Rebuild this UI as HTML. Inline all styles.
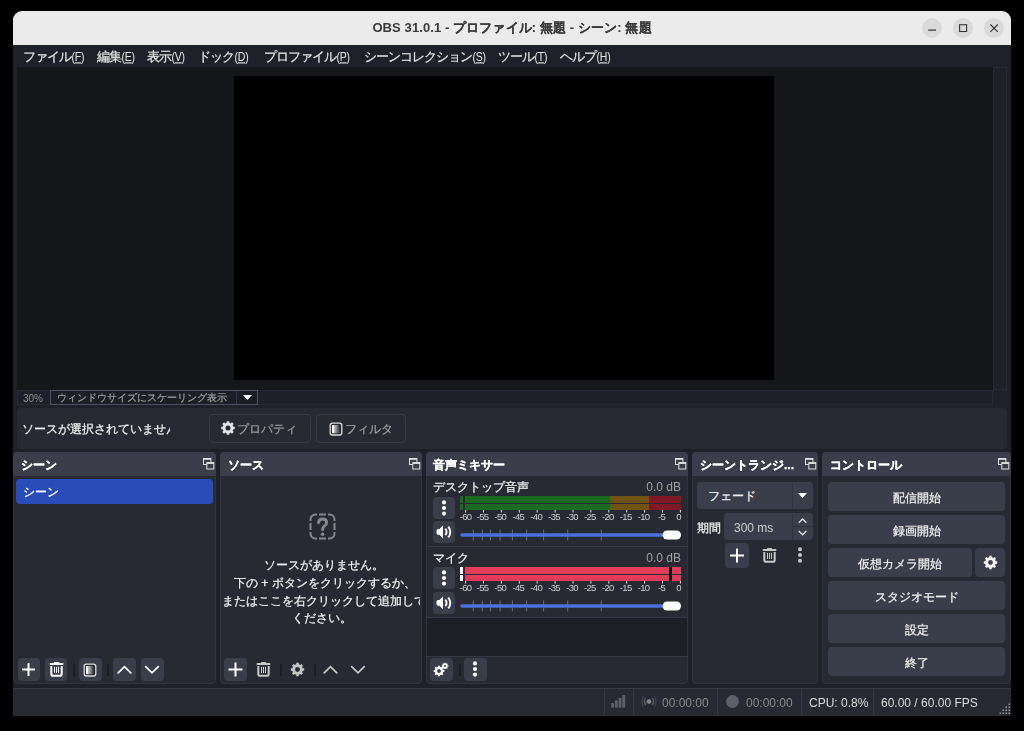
<!DOCTYPE html>
<html><head><meta charset="utf-8">
<style>
*{box-sizing:border-box;margin:0;padding:0}
html,body{width:1024px;height:731px;background:#000;overflow:hidden;font-family:"Liberation Sans",sans-serif;color:#fff;position:relative}
.a{position:absolute}
.t{position:absolute;white-space:nowrap;line-height:1}
svg{position:absolute;overflow:visible}
#win{left:13px;top:11px;width:998px;height:705px;background:#1f212a;border-radius:9px 9px 0 0;overflow:hidden}
#title{left:13px;top:11px;width:998px;height:34px;background:#ebebeb;border-radius:9px 9px 0 0}
.wb{width:20px;height:20px;border-radius:50%;background:#dadada;top:17.5px}
.menu{top:50px;font-size:13px;letter-spacing:-1px;color:#e6e6e6;-webkit-text-stroke:0.2px #e6e6e6}
.mn{display:inline-block;font-weight:normal;font-size:10.5px;letter-spacing:-0.2px;-webkit-text-stroke:0;transform:scaleY(1.15);transform-origin:50% 75%;margin-left:0.5px}
.mn u{text-decoration:underline;text-decoration-thickness:1px;text-underline-offset:1px}
#preview{left:17px;top:67px;width:976px;height:323px;background:#16171b}
#canvas{left:234px;top:76px;width:540px;height:304px;background:#000}
#vscroll{left:993px;top:67px;width:14px;height:323px;background:#1f212a;border:1px solid #292b34}
#scalerow{left:17px;top:390px;width:976px;height:15px;background:#1e2029;border:1px solid #292b34}
#combo{left:50px;top:390px;width:208px;height:15px;border:1px solid #4e5263;background:#1c1e26}
#ctx{left:17px;top:408px;width:990px;height:41px;background:#272a33;border-radius:4px}
.pbtn{top:414px;height:29px;border:1px solid #3a3d48;border-radius:4px;background:#272a33}
.dock{top:452px;height:232px;background:#272a33;border:1px solid #30333d;border-radius:4px}
.dt{top:452px;height:24px;background:#3b3e4a;border-radius:4px 4px 0 0}
.dtt{top:459px;font-weight:bold;font-size:12px;color:#fff;-webkit-text-stroke:0.3px #fff}
.s{-webkit-text-stroke:0.25px currentColor}
.btn{background:#3a3d4a;border-radius:4px}
.sep{width:2px;background:#1b1d24}
#status{left:13px;top:688px;width:998px;height:28px;background:#272a33;border-top:1px solid #363945}
.ssep{top:689px;width:1px;height:27px;background:#363945}
.cbtn{left:828px;width:177px;height:29px;background:#3a3d4a;border-radius:4px}
.ctext{font-size:12px;color:#f0f0f0;-webkit-text-stroke:0.25px #f0f0f0}
#root{position:absolute;left:0;top:0;width:1024px;height:731px;will-change:transform}
</style></head><body><div id="root">
<div id="win" class="a"></div>
<div id="title" class="a"></div>
<div class="t" style="left:372px;width:280px;text-align:center;top:21px;font-size:13px;letter-spacing:0.1px;font-weight:bold;color:#3a3a3a;-webkit-text-stroke:0.05px #3a3a3a"><span style="font-size:13px;-webkit-text-stroke:0">OBS 31.0.1 - </span>プロファイル: 無題 - シーン: 無題</div>
<div class="a wb" style="left:922px"></div>
<div class="a wb" style="left:953px"></div>
<div class="a wb" style="left:984px"></div>
<svg style="left:922px;top:17.5px" width="20" height="20"><line x1="6.2" y1="12.1" x2="14" y2="12.1" stroke="#333" stroke-width="1.2"/></svg>
<svg style="left:953px;top:17.5px" width="20" height="20"><rect x="6.6" y="6.7" width="7" height="6.8" fill="none" stroke="#333" stroke-width="1.1"/></svg>
<svg style="left:984px;top:17.5px" width="20" height="20"><path d="M6.4 6.5 L13.8 13.9 M13.8 6.5 L6.4 13.9" stroke="#333" stroke-width="1.1"/></svg>

<div class="t menu" style="left:23px">ファイル<b class="mn">(<u>F</u>)</b></div>
<div class="t menu" style="left:97px">編集<b class="mn">(<u>E</u>)</b></div>
<div class="t menu" style="left:147px">表示<b class="mn">(<u>V</u>)</b></div>
<div class="t menu" style="left:198px">ドック<b class="mn">(<u>D</u>)</b></div>
<div class="t menu" style="left:264px">プロファイル<b class="mn">(<u>P</u>)</b></div>
<div class="t menu" style="left:364px">シーンコレクション<b class="mn">(<u>S</u>)</b></div>
<div class="t menu" style="left:498px">ツール<b class="mn">(<u>T</u>)</b></div>
<div class="t menu" style="left:560px">ヘルプ<b class="mn">(<u>H</u>)</b></div>

<div id="preview" class="a"></div>
<div id="canvas" class="a"></div>
<div id="vscroll" class="a"></div>
<div id="scalerow" class="a"></div>
<div class="t" style="left:23px;top:393.5px;font-size:10px;color:#8c8c8c">30%</div>
<div id="combo" class="a"></div>
<div class="a" style="left:236px;top:391px;width:1px;height:13px;background:#33364a"></div>
<div class="t" style="left:56.5px;top:393px;font-size:10px;color:#a0a0a0;-webkit-text-stroke:0.2px #a0a0a0">ウィンドウサイズにスケーリング表示</div>
<svg style="left:243px;top:395px" width="10" height="6"><path d="M0 0 L9 0 L4.5 5Z" fill="#fff"/></svg>

<div id="ctx" class="a"></div>
<div class="a" style="left:17px;top:408px;width:153px;height:41px;overflow:hidden"><div class="t" style="left:5px;top:15px;font-size:12px;color:#f0f0f0;-webkit-text-stroke:0.25px #f0f0f0">ソースが選択されていません</div></div>
<div class="a pbtn" style="left:209px;width:102px"></div>
<svg style="left:221px;top:421px" width="14" height="14"><path fill-rule="evenodd" fill="#e2e4ea" d="M11.99,4.93 L12.25,5.74 L13.78,5.71 L13.78,8.29 L12.25,8.26 L11.99,9.07 L11.60,9.82 L12.71,10.88 L10.88,12.71 L9.82,11.60 L9.07,11.99 L8.26,12.25 L8.29,13.78 L5.71,13.78 L5.74,12.25 L4.93,11.99 L4.18,11.60 L3.12,12.71 L1.29,10.88 L2.40,9.82 L2.01,9.07 L1.75,8.26 L0.22,8.29 L0.22,5.71 L1.75,5.74 L2.01,4.93 L2.40,4.18 L1.29,3.12 L3.12,1.29 L4.18,2.40 L4.93,2.01 L5.74,1.75 L5.71,0.22 L8.29,0.22 L8.26,1.75 L9.07,2.01 L9.82,2.40 L10.88,1.29 L12.71,3.12 L11.60,4.18Z M9.50,7.00 A2.5,2.5 0 1 0 4.50,7.00 A2.5,2.5 0 1 0 9.50,7.00Z"/></svg>
<div class="t" style="left:237px;top:423px;font-size:12px;color:#a0a0a0;-webkit-text-stroke:0.2px #a0a0a0">プロパティ</div>
<div class="a pbtn" style="left:316px;width:90px"></div>
<svg style="left:328.5px;top:421.5px" width="14" height="14"><defs><linearGradient id="fg2" x1="0" x2="1"><stop offset="0" stop-color="#d0d0d0"/><stop offset="1" stop-color="#2a2d37"/></linearGradient></defs><rect x="1.2" y="1.2" width="11.6" height="11.8" rx="2.2" fill="#2a2d37" stroke="#dcdcdc" stroke-width="1.3"/><rect x="3" y="3" width="2.1" height="8.2" fill="#fff"/><rect x="5.1" y="3" width="5.6" height="8.2" fill="url(#fg2)"/></svg>
<div class="t" style="left:345px;top:423px;font-size:12px;color:#a0a0a0;-webkit-text-stroke:0.2px #a0a0a0">フィルタ</div>

<!-- DOCKS -->
<div id="status" class="a"></div>
<!-- dock frames -->
<div class="a dock" style="left:13px;width:203px"></div>
<div class="a dt" style="left:13px;width:203px"></div>
<div class="t dtt" style="left:21px">シーン</div>
<div class="a dock" style="left:220px;width:202px"></div>
<div class="a dt" style="left:220px;width:202px"></div>
<div class="t dtt" style="left:228px">ソース</div>
<div class="a dock" style="left:426px;width:262px"></div>
<div class="a dt" style="left:426px;width:262px"></div>
<div class="t dtt" style="left:433px">音声ミキサー</div>
<div class="a dock" style="left:692px;width:126px"></div>
<div class="a dt" style="left:692px;width:126px"></div>
<div class="t dtt" style="left:700px">シーントランジ...</div>
<div class="a dock" style="left:822px;width:189px"></div>
<div class="a dt" style="left:822px;width:189px"></div>
<div class="t dtt" style="left:830px">コントロール</div>
<!-- float icons -->
<svg style="left:202px;top:457px" width="13" height="13"><rect x="1.5" y="1.5" width="7.4" height="6" fill="none" stroke="#e0e0e0" stroke-width="1"/><line x1="1.5" y1="2.1" x2="8.9" y2="2.1" stroke="#e0e0e0" stroke-width="1.5"/><rect x="4.8" y="5.6" width="7.0" height="6.4" fill="#3b3e4a" stroke="#e0e0e0" stroke-width="1"/><line x1="4.8" y1="6.2" x2="11.8" y2="6.2" stroke="#e0e0e0" stroke-width="1.5"/></svg><svg style="left:408px;top:457px" width="13" height="13"><rect x="1.5" y="1.5" width="7.4" height="6" fill="none" stroke="#e0e0e0" stroke-width="1"/><line x1="1.5" y1="2.1" x2="8.9" y2="2.1" stroke="#e0e0e0" stroke-width="1.5"/><rect x="4.8" y="5.6" width="7.0" height="6.4" fill="#3b3e4a" stroke="#e0e0e0" stroke-width="1"/><line x1="4.8" y1="6.2" x2="11.8" y2="6.2" stroke="#e0e0e0" stroke-width="1.5"/></svg><svg style="left:674px;top:457px" width="13" height="13"><rect x="1.5" y="1.5" width="7.4" height="6" fill="none" stroke="#e0e0e0" stroke-width="1"/><line x1="1.5" y1="2.1" x2="8.9" y2="2.1" stroke="#e0e0e0" stroke-width="1.5"/><rect x="4.8" y="5.6" width="7.0" height="6.4" fill="#3b3e4a" stroke="#e0e0e0" stroke-width="1"/><line x1="4.8" y1="6.2" x2="11.8" y2="6.2" stroke="#e0e0e0" stroke-width="1.5"/></svg><svg style="left:804px;top:457px" width="13" height="13"><rect x="1.5" y="1.5" width="7.4" height="6" fill="none" stroke="#e0e0e0" stroke-width="1"/><line x1="1.5" y1="2.1" x2="8.9" y2="2.1" stroke="#e0e0e0" stroke-width="1.5"/><rect x="4.8" y="5.6" width="7.0" height="6.4" fill="#3b3e4a" stroke="#e0e0e0" stroke-width="1"/><line x1="4.8" y1="6.2" x2="11.8" y2="6.2" stroke="#e0e0e0" stroke-width="1.5"/></svg><svg style="left:997px;top:457px" width="13" height="13"><rect x="1.5" y="1.5" width="7.4" height="6" fill="none" stroke="#e0e0e0" stroke-width="1"/><line x1="1.5" y1="2.1" x2="8.9" y2="2.1" stroke="#e0e0e0" stroke-width="1.5"/><rect x="4.8" y="5.6" width="7.0" height="6.4" fill="#3b3e4a" stroke="#e0e0e0" stroke-width="1"/><line x1="4.8" y1="6.2" x2="11.8" y2="6.2" stroke="#e0e0e0" stroke-width="1.5"/></svg>
<!-- scenes -->
<div class="a" style="left:16px;top:478.5px;width:197px;height:25.5px;background:#284cb8;border-radius:4px"></div>
<div class="t s" style="left:23px;top:486px;font-size:12px;color:#fff">シーン</div>
<div class="a btn" style="left:18px;top:658px;width:22px;height:23px"></div>
<svg style="left:18px;top:658px" width="22" height="23"><path d="M4 11.5 H17 M10.5 5 V18" stroke="#fff" stroke-width="2"/></svg>
<div class="a btn" style="left:45px;top:658px;width:22px;height:23px"></div>
<svg style="left:45px;top:658px" width="22" height="23"><rect x="4.5" y="4.9" width="14" height="2.1" rx="1" fill="#fff"/><rect x="9" y="4" width="5" height="1.5" rx="0.6" fill="#fff"/><path d="M6.3 8 V15.9 Q6.3 17.8 8.3 17.8 H14.7 Q16.7 17.8 16.7 15.9 V8" fill="none" stroke="#fff" stroke-width="2"/><path d="M9.5 8.8 V15 M11.5 8.8 V15 M13.5 8.8 V15" stroke="#fff" stroke-width="1"/></svg>
<div class="a sep" style="left:73px;top:664px;height:12px"></div>
<div class="a btn" style="left:79px;top:658px;width:23px;height:23px"></div>
<svg style="left:83px;top:662.5px" width="14" height="14"><rect x="1.2" y="1.2" width="11.6" height="11.8" rx="2.2" fill="#2a2d37" stroke="#dcdcdc" stroke-width="1.3"/><rect x="3" y="3" width="2.1" height="8.2" fill="#fff"/><rect x="5.1" y="3" width="5.6" height="8.2" fill="url(#fg2)"/></svg>
<div class="a sep" style="left:107px;top:664px;height:12px"></div>
<div class="a btn" style="left:113px;top:658px;width:23px;height:23px"></div>
<svg style="left:113px;top:658px" width="23" height="23"><path d="M5.2 14.8 L11.5 8.6 L17.8 14.8" fill="none" stroke="#fff" stroke-width="1.7" stroke-linecap="round"/></svg>
<div class="a btn" style="left:141px;top:658px;width:23px;height:23px"></div>
<svg style="left:141px;top:658px" width="23" height="23"><path d="M4.7 8.6 L11 14.8 L17.3 8.6" fill="none" stroke="#fff" stroke-width="1.7" stroke-linecap="round"/></svg>

<!-- sources -->
<svg style="left:309.3px;top:512.5px" width="28" height="28"><path d="M1.5 8 V6.5 A5 5 0 0 1 6.5 1.5 H8 M10 1.5 H17 M19 1.5 H20.5 A5 5 0 0 1 25.5 6.5 V8 M25.5 10 V17 M25.5 19 V20.5 A5 5 0 0 1 20.5 25.5 H19 M17 25.5 H10 M8 25.5 H6.5 A5 5 0 0 1 1.5 20.5 V19 M1.5 17 V10" fill="none" stroke="#85878f" stroke-width="2"/><path d="M9.6 9.8 Q9.6 6 13.6 6 Q17.6 6 17.6 9.6 Q17.6 11.9 15.5 13.1 Q13.6 14.2 13.6 16.4 V16.8" fill="none" stroke="#85878f" stroke-width="2.9" stroke-linecap="round" stroke-linejoin="round"/><circle cx="13.6" cy="21.2" r="1.8" fill="#85878f"/></svg>
<div class="a" style="left:221px;top:552px;width:199px;height:80px;overflow:hidden;font-size:12px;color:#f0f0f0;-webkit-text-stroke:0.25px #f0f0f0">
<div class="t" style="left:43px;top:7px">ソースがありません。</div>
<div class="t" style="left:13px;top:25px">下の + ボタンをクリックするか、</div>
<div class="t" style="left:1px;top:43px">またはここを右クリックして追加してください。</div>
<div class="t" style="left:70.5px;top:59.5px">ください。</div>
</div>
</div>
<div class="a btn" style="left:224px;top:658px;width:23px;height:23px"></div>
<svg style="left:224px;top:658px" width="23" height="23"><path d="M4.5 11.5 H18.5 M11.5 4.5 V18.5" stroke="#fff" stroke-width="2"/></svg>
<svg style="left:252px;top:658px" width="22" height="23"><rect x="4.5" y="4.9" width="14" height="2.1" rx="1" fill="#c8c8c8"/><rect x="9" y="4" width="5" height="1.5" rx="0.6" fill="#c8c8c8"/><path d="M6.3 8 V15.9 Q6.3 17.8 8.3 17.8 H14.7 Q16.7 17.8 16.7 15.9 V8" fill="none" stroke="#c8c8c8" stroke-width="2"/><path d="M9.5 8.8 V15 M11.5 8.8 V15 M13.5 8.8 V15" stroke="#c8c8c8" stroke-width="1"/></svg>
<div class="a sep" style="left:280px;top:664px;height:12px"></div>
<svg style="left:289.5px;top:662.0px" width="15" height="15"><path fill-rule="evenodd" fill="#c4c4c4" d="M12.40,5.47 L12.65,6.26 L14.18,6.23 L14.18,8.77 L12.65,8.74 L12.40,9.53 L12.02,10.27 L13.12,11.32 L11.32,13.12 L10.27,12.02 L9.53,12.40 L8.74,12.65 L8.77,14.18 L6.23,14.18 L6.26,12.65 L5.47,12.40 L4.73,12.02 L3.68,13.12 L1.88,11.32 L2.98,10.27 L2.60,9.53 L2.35,8.74 L0.82,8.77 L0.82,6.23 L2.35,6.26 L2.60,5.47 L2.98,4.73 L1.88,3.68 L3.68,1.88 L4.73,2.98 L5.47,2.60 L6.26,2.35 L6.23,0.82 L8.77,0.82 L8.74,2.35 L9.53,2.60 L10.27,2.98 L11.32,1.88 L13.12,3.68 L12.02,4.73Z M9.90,7.50 A2.4,2.4 0 1 0 5.10,7.50 A2.4,2.4 0 1 0 9.90,7.50Z"/></svg>
<div class="a sep" style="left:314px;top:664px;height:12px"></div>
<svg style="left:319px;top:658px" width="23" height="23"><path d="M5.2 14.8 L11.5 8.6 L17.8 14.8" fill="none" stroke="#c8c8c8" stroke-width="1.7" stroke-linecap="round"/></svg>
<svg style="left:347px;top:658px" width="23" height="23"><path d="M4.7 8.6 L11 14.8 L17.3 8.6" fill="none" stroke="#c8c8c8" stroke-width="1.7" stroke-linecap="round"/></svg>
<!-- mixer -->
<div class="t" style="left:433px;top:481px;font-size:12px;color:#f0f0f0;-webkit-text-stroke:0.25px #f0f0f0">デスクトップ音声</div>
<div class="t" style="left:641px;top:481px;font-size:12px;color:#a0a0a0;width:40px;text-align:right">0.0 dB</div>
<div class="a btn" style="left:433px;top:497px;width:22px;height:22px"></div>
<svg style="left:440px;top:497.7px" width="8" height="20"><circle cx="4" cy="4.4" r="2.1" fill="#fff"/><circle cx="4" cy="10.0" r="2.1" fill="#fff"/><circle cx="4" cy="15.6" r="2.1" fill="#fff"/></svg>
<div class="a btn" style="left:433px;top:520.5px;width:22px;height:22px"></div>
<svg style="left:433px;top:520.5px" width="22" height="22"><path d="M10 4.4 V17.4 L6.4 13.7 H5.2 Q3.5 13.7 3.5 12 V9.9 Q3.5 8.1 5.2 8.1 H6.4 Z" fill="#fff"/><path d="M12.3 7.6 Q14.9 10.9 12.3 14.2" fill="none" stroke="#fff" stroke-width="1.9"/><path d="M15.3 5.6 Q19.2 11 15.3 16.4" fill="none" stroke="#fff" stroke-width="1.9"/></svg>
<div class="a" style="left:460px;top:496.2px;width:3.3px;height:6.5px;background:#1a6a22"></div>
<div class="a" style="left:465px;top:496.2px;width:144.5px;height:6.5px;background:#1a6a22"></div>
<div class="a" style="left:609.5px;top:496.2px;width:39.5px;height:6.5px;background:#6e5312"></div>
<div class="a" style="left:649px;top:496.2px;width:32px;height:6.5px;background:#801826"></div>
<div class="a" style="left:460px;top:503.9px;width:3.3px;height:6.5px;background:#1a6a22"></div>
<div class="a" style="left:465px;top:503.9px;width:144.5px;height:6.5px;background:#1a6a22"></div>
<div class="a" style="left:609.5px;top:503.9px;width:39.5px;height:6.5px;background:#6e5312"></div>
<div class="a" style="left:649px;top:503.9px;width:32px;height:6.5px;background:#801826"></div>
<svg style="left:455px;top:510.4px" width="232" height="10">
<line x1="10.60" y1="0" x2="10.60" y2="2.6" stroke="#e0e0e0" stroke-width="1"/>
<line x1="28.50" y1="0" x2="28.50" y2="2.6" stroke="#e0e0e0" stroke-width="1"/>
<line x1="46.40" y1="0" x2="46.40" y2="2.6" stroke="#e0e0e0" stroke-width="1"/>
<line x1="64.30" y1="0" x2="64.30" y2="2.6" stroke="#e0e0e0" stroke-width="1"/>
<line x1="82.20" y1="0" x2="82.20" y2="2.6" stroke="#e0e0e0" stroke-width="1"/>
<line x1="100.10" y1="0" x2="100.10" y2="2.6" stroke="#e0e0e0" stroke-width="1"/>
<line x1="118.00" y1="0" x2="118.00" y2="2.6" stroke="#e0e0e0" stroke-width="1"/>
<line x1="135.90" y1="0" x2="135.90" y2="2.6" stroke="#e0e0e0" stroke-width="1"/>
<line x1="153.80" y1="0" x2="153.80" y2="2.6" stroke="#e0e0e0" stroke-width="1"/>
<line x1="171.70" y1="0" x2="171.70" y2="2.6" stroke="#e0e0e0" stroke-width="1"/>
<line x1="189.60" y1="0" x2="189.60" y2="2.6" stroke="#e0e0e0" stroke-width="1"/>
<line x1="207.50" y1="0" x2="207.50" y2="2.6" stroke="#e0e0e0" stroke-width="1"/>
<line x1="225.40" y1="0" x2="225.40" y2="2.6" stroke="#e0e0e0" stroke-width="1"/>
</svg>
<div class="t" style="left:453.60px;width:24px;text-align:center;top:511.59999999999997px;font-size:9.5px;letter-spacing:-0.7px;color:#d0d0d0">-60</div>
<div class="t" style="left:470.50px;width:24px;text-align:center;top:511.59999999999997px;font-size:9.5px;letter-spacing:-0.7px;color:#d0d0d0">-55</div>
<div class="t" style="left:488.40px;width:24px;text-align:center;top:511.59999999999997px;font-size:9.5px;letter-spacing:-0.7px;color:#d0d0d0">-50</div>
<div class="t" style="left:506.30px;width:24px;text-align:center;top:511.59999999999997px;font-size:9.5px;letter-spacing:-0.7px;color:#d0d0d0">-45</div>
<div class="t" style="left:524.20px;width:24px;text-align:center;top:511.59999999999997px;font-size:9.5px;letter-spacing:-0.7px;color:#d0d0d0">-40</div>
<div class="t" style="left:542.10px;width:24px;text-align:center;top:511.59999999999997px;font-size:9.5px;letter-spacing:-0.7px;color:#d0d0d0">-35</div>
<div class="t" style="left:560.00px;width:24px;text-align:center;top:511.59999999999997px;font-size:9.5px;letter-spacing:-0.7px;color:#d0d0d0">-30</div>
<div class="t" style="left:577.90px;width:24px;text-align:center;top:511.59999999999997px;font-size:9.5px;letter-spacing:-0.7px;color:#d0d0d0">-25</div>
<div class="t" style="left:595.80px;width:24px;text-align:center;top:511.59999999999997px;font-size:9.5px;letter-spacing:-0.7px;color:#d0d0d0">-20</div>
<div class="t" style="left:613.70px;width:24px;text-align:center;top:511.59999999999997px;font-size:9.5px;letter-spacing:-0.7px;color:#d0d0d0">-15</div>
<div class="t" style="left:631.60px;width:24px;text-align:center;top:511.59999999999997px;font-size:9.5px;letter-spacing:-0.7px;color:#d0d0d0">-10</div>
<div class="t" style="left:649.50px;width:24px;text-align:center;top:511.59999999999997px;font-size:9.5px;letter-spacing:-0.7px;color:#d0d0d0">-5</div>
<div class="t" style="left:657px;width:24px;text-align:right;top:511.59999999999997px;font-size:9.5px;letter-spacing:-0.6px;color:#d0d0d0">0</div>
<svg style="left:455px;top:529.2px" width="232" height="12">
<line x1="18.30" y1="0.5" x2="18.30" y2="11.5" stroke="#6a6d78" stroke-width="1"/>
<line x1="27.30" y1="0.5" x2="27.30" y2="11.5" stroke="#6a6d78" stroke-width="1"/>
<line x1="35.50" y1="0.5" x2="35.50" y2="11.5" stroke="#6a6d78" stroke-width="1"/>
<line x1="45.10" y1="0.5" x2="45.10" y2="11.5" stroke="#6a6d78" stroke-width="1"/>
<line x1="57.40" y1="0.5" x2="57.40" y2="11.5" stroke="#6a6d78" stroke-width="1"/>
<line x1="71.60" y1="0.5" x2="71.60" y2="11.5" stroke="#6a6d78" stroke-width="1"/>
<line x1="88.60" y1="0.5" x2="88.60" y2="11.5" stroke="#6a6d78" stroke-width="1"/>
<line x1="112.70" y1="0.5" x2="112.70" y2="11.5" stroke="#6a6d78" stroke-width="1"/>
<line x1="146.30" y1="0.5" x2="146.30" y2="11.5" stroke="#6a6d78" stroke-width="1"/>
<line x1="7" y1="6" x2="215" y2="6" stroke="#4a70dc" stroke-width="3.6" stroke-linecap="round"/>
<rect x="207.60000000000002" y="1.5" width="18.4" height="9" rx="4.5" fill="#fff"/>
</svg>
<div class="a" style="left:426px;top:546px;width:262px;height:1px;background:#363945"></div>
<div class="t" style="left:433px;top:552px;font-size:12px;color:#f0f0f0;-webkit-text-stroke:0.25px #f0f0f0">マイク</div>
<div class="t" style="left:641px;top:552px;font-size:12px;color:#a0a0a0;width:40px;text-align:right">0.0 dB</div>
<div class="a btn" style="left:433px;top:567px;width:22px;height:22px"></div>
<svg style="left:440px;top:568px" width="8" height="20"><circle cx="4" cy="4.4" r="2.1" fill="#fff"/><circle cx="4" cy="10.0" r="2.1" fill="#fff"/><circle cx="4" cy="15.6" r="2.1" fill="#fff"/></svg>
<div class="a btn" style="left:433px;top:591.5px;width:22px;height:22px"></div>
<svg style="left:433px;top:591.5px" width="22" height="22"><path d="M10 4.4 V17.4 L6.4 13.7 H5.2 Q3.5 13.7 3.5 12 V9.9 Q3.5 8.1 5.2 8.1 H6.4 Z" fill="#fff"/><path d="M12.3 7.6 Q14.9 10.9 12.3 14.2" fill="none" stroke="#fff" stroke-width="1.9"/><path d="M15.3 5.6 Q19.2 11 15.3 16.4" fill="none" stroke="#fff" stroke-width="1.9"/></svg>
<div class="a" style="left:460px;top:567.2px;width:3.2px;height:6.5px;background:#fff"></div>
<div class="a" style="left:460px;top:574.9000000000001px;width:3.2px;height:6.5px;background:#fff"></div>
<div class="a" style="left:465px;top:567.2px;width:216px;height:6.5px;background:#e23c58"></div>
<div class="a" style="left:669.2px;top:567.2px;width:2.6px;height:6.5px;background:#000"></div>
<div class="a" style="left:465px;top:574.9000000000001px;width:216px;height:6.5px;background:#e23c58"></div>
<div class="a" style="left:669.2px;top:574.9000000000001px;width:2.6px;height:6.5px;background:#000"></div>
<svg style="left:455px;top:581.4000000000001px" width="232" height="10">
<line x1="10.60" y1="0" x2="10.60" y2="2.6" stroke="#e0e0e0" stroke-width="1"/>
<line x1="28.50" y1="0" x2="28.50" y2="2.6" stroke="#e0e0e0" stroke-width="1"/>
<line x1="46.40" y1="0" x2="46.40" y2="2.6" stroke="#e0e0e0" stroke-width="1"/>
<line x1="64.30" y1="0" x2="64.30" y2="2.6" stroke="#e0e0e0" stroke-width="1"/>
<line x1="82.20" y1="0" x2="82.20" y2="2.6" stroke="#e0e0e0" stroke-width="1"/>
<line x1="100.10" y1="0" x2="100.10" y2="2.6" stroke="#e0e0e0" stroke-width="1"/>
<line x1="118.00" y1="0" x2="118.00" y2="2.6" stroke="#e0e0e0" stroke-width="1"/>
<line x1="135.90" y1="0" x2="135.90" y2="2.6" stroke="#e0e0e0" stroke-width="1"/>
<line x1="153.80" y1="0" x2="153.80" y2="2.6" stroke="#e0e0e0" stroke-width="1"/>
<line x1="171.70" y1="0" x2="171.70" y2="2.6" stroke="#e0e0e0" stroke-width="1"/>
<line x1="189.60" y1="0" x2="189.60" y2="2.6" stroke="#e0e0e0" stroke-width="1"/>
<line x1="207.50" y1="0" x2="207.50" y2="2.6" stroke="#e0e0e0" stroke-width="1"/>
<line x1="225.40" y1="0" x2="225.40" y2="2.6" stroke="#e0e0e0" stroke-width="1"/>
</svg>
<div class="t" style="left:453.60px;width:24px;text-align:center;top:582.6000000000001px;font-size:9.5px;letter-spacing:-0.7px;color:#d0d0d0">-60</div>
<div class="t" style="left:470.50px;width:24px;text-align:center;top:582.6000000000001px;font-size:9.5px;letter-spacing:-0.7px;color:#d0d0d0">-55</div>
<div class="t" style="left:488.40px;width:24px;text-align:center;top:582.6000000000001px;font-size:9.5px;letter-spacing:-0.7px;color:#d0d0d0">-50</div>
<div class="t" style="left:506.30px;width:24px;text-align:center;top:582.6000000000001px;font-size:9.5px;letter-spacing:-0.7px;color:#d0d0d0">-45</div>
<div class="t" style="left:524.20px;width:24px;text-align:center;top:582.6000000000001px;font-size:9.5px;letter-spacing:-0.7px;color:#d0d0d0">-40</div>
<div class="t" style="left:542.10px;width:24px;text-align:center;top:582.6000000000001px;font-size:9.5px;letter-spacing:-0.7px;color:#d0d0d0">-35</div>
<div class="t" style="left:560.00px;width:24px;text-align:center;top:582.6000000000001px;font-size:9.5px;letter-spacing:-0.7px;color:#d0d0d0">-30</div>
<div class="t" style="left:577.90px;width:24px;text-align:center;top:582.6000000000001px;font-size:9.5px;letter-spacing:-0.7px;color:#d0d0d0">-25</div>
<div class="t" style="left:595.80px;width:24px;text-align:center;top:582.6000000000001px;font-size:9.5px;letter-spacing:-0.7px;color:#d0d0d0">-20</div>
<div class="t" style="left:613.70px;width:24px;text-align:center;top:582.6000000000001px;font-size:9.5px;letter-spacing:-0.7px;color:#d0d0d0">-15</div>
<div class="t" style="left:631.60px;width:24px;text-align:center;top:582.6000000000001px;font-size:9.5px;letter-spacing:-0.7px;color:#d0d0d0">-10</div>
<div class="t" style="left:649.50px;width:24px;text-align:center;top:582.6000000000001px;font-size:9.5px;letter-spacing:-0.7px;color:#d0d0d0">-5</div>
<div class="t" style="left:657px;width:24px;text-align:right;top:582.6000000000001px;font-size:9.5px;letter-spacing:-0.6px;color:#d0d0d0">0</div>
<svg style="left:455px;top:600.2px" width="232" height="12">
<line x1="18.30" y1="0.5" x2="18.30" y2="11.5" stroke="#6a6d78" stroke-width="1"/>
<line x1="27.30" y1="0.5" x2="27.30" y2="11.5" stroke="#6a6d78" stroke-width="1"/>
<line x1="35.50" y1="0.5" x2="35.50" y2="11.5" stroke="#6a6d78" stroke-width="1"/>
<line x1="45.10" y1="0.5" x2="45.10" y2="11.5" stroke="#6a6d78" stroke-width="1"/>
<line x1="57.40" y1="0.5" x2="57.40" y2="11.5" stroke="#6a6d78" stroke-width="1"/>
<line x1="71.60" y1="0.5" x2="71.60" y2="11.5" stroke="#6a6d78" stroke-width="1"/>
<line x1="88.60" y1="0.5" x2="88.60" y2="11.5" stroke="#6a6d78" stroke-width="1"/>
<line x1="112.70" y1="0.5" x2="112.70" y2="11.5" stroke="#6a6d78" stroke-width="1"/>
<line x1="146.30" y1="0.5" x2="146.30" y2="11.5" stroke="#6a6d78" stroke-width="1"/>
<line x1="7" y1="6" x2="215" y2="6" stroke="#4a70dc" stroke-width="3.6" stroke-linecap="round"/>
<rect x="207.60000000000002" y="1.5" width="18.4" height="9" rx="4.5" fill="#fff"/>
</svg>
<div class="a" style="left:426px;top:617px;width:262px;height:1px;background:#363945"></div>
<div class="a" style="left:427px;top:618px;width:260px;height:38px;background:#1e2028"></div>
<div class="a" style="left:426px;top:656px;width:262px;height:1px;background:#363945"></div>
<div class="a btn" style="left:430px;top:658px;width:23px;height:23px"></div>
<svg style="left:432.9px;top:664.8px" width="12" height="12"><path fill-rule="evenodd" fill="#fff" d="M9.88,4.39 L10.08,5.02 L11.30,4.99 L11.30,7.01 L10.08,6.98 L9.88,7.61 L9.58,8.19 L10.47,9.04 L9.04,10.47 L8.19,9.58 L7.61,9.88 L6.98,10.08 L7.01,11.30 L4.99,11.30 L5.02,10.08 L4.39,9.88 L3.81,9.58 L2.96,10.47 L1.53,9.04 L2.42,8.19 L2.12,7.61 L1.92,6.98 L0.70,7.01 L0.70,4.99 L1.92,5.02 L2.12,4.39 L2.42,3.81 L1.53,2.96 L2.96,1.53 L3.81,2.42 L4.39,2.12 L5.02,1.92 L4.99,0.70 L7.01,0.70 L6.98,1.92 L7.61,2.12 L8.19,2.42 L9.04,1.53 L10.47,2.96 L9.58,3.81Z M7.90,6.00 A1.9,1.9 0 1 0 4.10,6.00 A1.9,1.9 0 1 0 7.90,6.00Z"/></svg><svg style="left:441.3px;top:662.0px" width="8" height="8"><path fill-rule="evenodd" fill="#fff" d="M6.40,3.01 L6.53,3.39 L7.34,3.36 L7.34,4.64 L6.53,4.61 L6.40,4.99 L6.22,5.36 L6.81,5.91 L5.91,6.81 L5.36,6.22 L4.99,6.40 L4.61,6.53 L4.64,7.34 L3.36,7.34 L3.39,6.53 L3.01,6.40 L2.64,6.22 L2.09,6.81 L1.19,5.91 L1.78,5.36 L1.60,4.99 L1.47,4.61 L0.66,4.64 L0.66,3.36 L1.47,3.39 L1.60,3.01 L1.78,2.64 L1.19,2.09 L2.09,1.19 L2.64,1.78 L3.01,1.60 L3.39,1.47 L3.36,0.66 L4.64,0.66 L4.61,1.47 L4.99,1.60 L5.36,1.78 L5.91,1.19 L6.81,2.09 L6.22,2.64Z M5.10,4.00 A1.1,1.1 0 1 0 2.90,4.00 A1.1,1.1 0 1 0 5.10,4.00Z"/></svg>
<div class="a sep" style="left:459px;top:664px;height:12px;width:1.5px"></div>
<div class="a btn" style="left:464px;top:658px;width:23px;height:23px"></div>
<svg style="left:470.8px;top:659.2px" width="8" height="20"><circle cx="4" cy="4.4" r="2.1" fill="#fff"/><circle cx="4" cy="10.0" r="2.1" fill="#fff"/><circle cx="4" cy="15.6" r="2.1" fill="#fff"/></svg>

<!-- transitions -->
<div class="a btn" style="left:697px;top:482px;width:116px;height:27px"></div>
<div class="a" style="left:792px;top:483px;width:1px;height:25px;background:#30333d"></div>
<svg style="left:798.3px;top:493.4px" width="10" height="6"><path d="M0 0 L9 0 L4.5 4.9Z" fill="#fff"/></svg>
<div class="t" style="left:708px;top:490px;font-size:12px;color:#f0f0f0;-webkit-text-stroke:0.25px #f0f0f0">フェード</div>
<div class="t" style="left:697px;top:522px;font-size:12px;color:#f0f0f0;-webkit-text-stroke:0.25px #f0f0f0">期間</div>
<div class="a btn" style="left:724px;top:513px;width:89px;height:27px"></div>
<div class="a" style="left:792px;top:514px;width:1px;height:25px;background:#30333d"></div>
<div class="a" style="left:793px;top:526px;width:20px;height:1px;background:#30333d"></div>
<svg style="left:798px;top:518px" width="10" height="6"><path d="M0.8 4.8 L4.6 1 L8.4 4.8" fill="none" stroke="#e0e0e0" stroke-width="1.4"/></svg>
<svg style="left:798px;top:530px" width="10" height="6"><path d="M0.8 1 L4.6 4.8 L8.4 1" fill="none" stroke="#e0e0e0" stroke-width="1.4"/></svg>
<div class="t" style="left:734px;top:522px;font-size:12px;color:#cfcfcf">300 ms</div>
<div class="a btn" style="left:725px;top:543px;width:24px;height:25px"></div>
<svg style="left:725px;top:543px" width="24" height="25"><path d="M5 12.5 H19 M12 5.5 V19.5" stroke="#fff" stroke-width="2"/></svg>
<svg style="left:757.5px;top:544px" width="22" height="23"><rect x="4.5" y="4.9" width="14" height="2.1" rx="1" fill="#c8c8c8"/><rect x="9" y="4" width="5" height="1.5" rx="0.6" fill="#c8c8c8"/><path d="M6.3 8 V15.9 Q6.3 17.8 8.3 17.8 H14.7 Q16.7 17.8 16.7 15.9 V8" fill="none" stroke="#c8c8c8" stroke-width="2"/><path d="M9.5 8.8 V15 M11.5 8.8 V15 M13.5 8.8 V15" stroke="#c8c8c8" stroke-width="1"/></svg>
<svg style="left:795.8px;top:545.2px" width="8" height="20"><circle cx="4" cy="4.2" r="2" fill="#c8c8c8"/><circle cx="4" cy="10.0" r="2" fill="#c8c8c8"/><circle cx="4" cy="15.8" r="2" fill="#c8c8c8"/></svg>

<!-- controls -->
<div class="a cbtn" style="top:482px"></div><div class="t ctext" style="left:828px;width:177px;text-align:center;top:492px">配信開始</div>
<div class="a cbtn" style="top:515px"></div><div class="t ctext" style="left:828px;width:177px;text-align:center;top:525px">録画開始</div>
<div class="a cbtn" style="top:548px;width:144px"></div><div class="t ctext" style="left:828px;width:144px;text-align:center;top:558px">仮想カメラ開始</div>
<div class="a cbtn" style="top:548px;left:975px;width:30px"></div>
<svg style="left:982.5px;top:555.0px" width="15" height="15"><path fill-rule="evenodd" fill="#fff" d="M12.40,5.47 L12.65,6.26 L14.18,6.23 L14.18,8.77 L12.65,8.74 L12.40,9.53 L12.02,10.27 L13.12,11.32 L11.32,13.12 L10.27,12.02 L9.53,12.40 L8.74,12.65 L8.77,14.18 L6.23,14.18 L6.26,12.65 L5.47,12.40 L4.73,12.02 L3.68,13.12 L1.88,11.32 L2.98,10.27 L2.60,9.53 L2.35,8.74 L0.82,8.77 L0.82,6.23 L2.35,6.26 L2.60,5.47 L2.98,4.73 L1.88,3.68 L3.68,1.88 L4.73,2.98 L5.47,2.60 L6.26,2.35 L6.23,0.82 L8.77,0.82 L8.74,2.35 L9.53,2.60 L10.27,2.98 L11.32,1.88 L13.12,3.68 L12.02,4.73Z M9.90,7.50 A2.4,2.4 0 1 0 5.10,7.50 A2.4,2.4 0 1 0 9.90,7.50Z"/></svg>
<div class="a cbtn" style="top:581px"></div><div class="t ctext" style="left:828px;width:177px;text-align:center;top:591px">スタジオモード</div>
<div class="a cbtn" style="top:614px"></div><div class="t ctext" style="left:828px;width:177px;text-align:center;top:624px">設定</div>
<div class="a cbtn" style="top:647px"></div><div class="t ctext" style="left:828px;width:177px;text-align:center;top:657px">終了</div>

<!-- status -->
<div class="a ssep" style="left:603.5px"></div>
<div class="a ssep" style="left:633px"></div>
<div class="a ssep" style="left:717px"></div>
<div class="a ssep" style="left:801px"></div>
<div class="a ssep" style="left:873px"></div>
<svg style="left:611px;top:694px" width="15" height="14"><rect x="0.10" y="9.00" width="2.8" height="4.7" fill="#5c5f6a"/><rect x="3.85" y="6.40" width="2.8" height="7.3" fill="#5c5f6a"/><rect x="7.60" y="3.90" width="2.8" height="9.8" fill="#5c5f6a"/><rect x="11.35" y="1.00" width="2.8" height="12.7" fill="#5c5f6a"/></svg>
<svg style="left:641px;top:695px" width="16" height="13"><circle cx="8" cy="6.5" r="2.3" fill="#8a8a8a"/><path d="M4.5 3 Q2.5 6.5 4.5 10 M11.5 3 Q13.5 6.5 11.5 10" fill="none" stroke="#5e6068" stroke-width="1.2"/><path d="M2.5 1.5 Q-0.5 6.5 2.5 11.5 M13.5 1.5 Q16.5 6.5 13.5 11.5" fill="none" stroke="#44464e" stroke-width="1.2"/></svg>
<div class="t" style="left:662px;top:697px;font-size:12px;color:#8a8a8a">00:00:00</div>
<svg style="left:726px;top:695px" width="13" height="13"><circle cx="6.5" cy="6.5" r="6.4" fill="#5c5f6a"/></svg>
<div class="t" style="left:746px;top:697px;font-size:12px;color:#8a8a8a">00:00:00</div>
<div class="t" style="left:809px;top:697px;font-size:12px;color:#dcdcdc">CPU: 0.8%</div>
<div class="t" style="left:881px;top:697px;font-size:12px;color:#dcdcdc">60.00 / 60.00 FPS</div>
<svg style="left:999px;top:703px" width="12" height="12"><rect x="9.5" y="9.5" width="1.5" height="1.5" fill="#9a9da8"/><rect x="6.5" y="9.5" width="1.5" height="1.5" fill="#9a9da8"/><rect x="3.5" y="9.5" width="1.5" height="1.5" fill="#9a9da8"/><rect x="0.5" y="9.5" width="1.5" height="1.5" fill="#9a9da8"/><rect x="9.5" y="6.5" width="1.5" height="1.5" fill="#9a9da8"/><rect x="6.5" y="6.5" width="1.5" height="1.5" fill="#9a9da8"/><rect x="3.5" y="6.5" width="1.5" height="1.5" fill="#9a9da8"/><rect x="9.5" y="3.5" width="1.5" height="1.5" fill="#9a9da8"/><rect x="6.5" y="3.5" width="1.5" height="1.5" fill="#9a9da8"/><rect x="9.5" y="0.5" width="1.5" height="1.5" fill="#9a9da8"/></svg>

</div></body></html>
